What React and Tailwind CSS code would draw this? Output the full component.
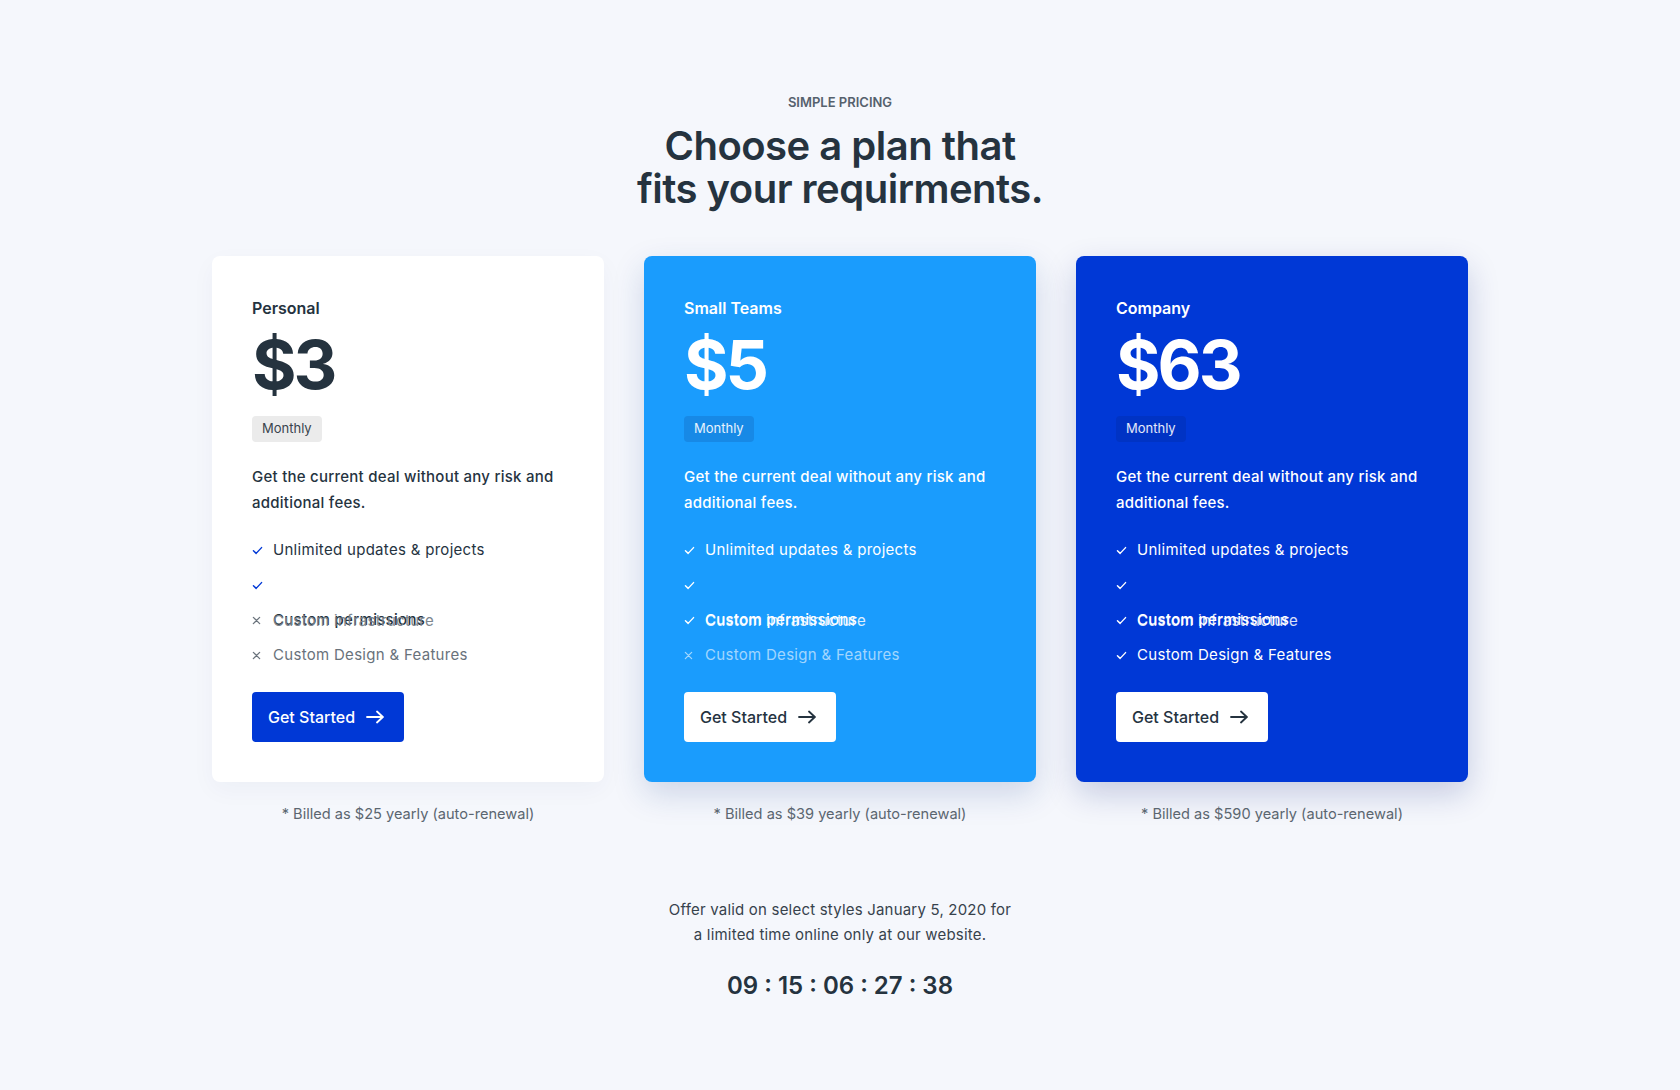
import React from "react";

const plans = [
    {
        name: "Personal",
        price: "$3",
        billed: "* Billed as $25 yearly (auto-renewal)",
        card: "bg-white shadow-[0_8px_24px_rgba(30,50,90,0.04)]",
        title: "text-[#25333f]",
        badge: "bg-[#ebebeb] text-[#3a444d]",
        desc: "text-[#25333f]",
        on: "text-[#0038d6]",
        off: "text-[#6b747d]",
        text: "text-[#25333f]",
        offText: "text-[#69727b]",
        ghost: "text-[#7d868f]",
        button: "bg-[#0038d6] text-white",
        features: [true, true, false, false],
    },
    {
        name: "Small Teams",
        price: "$5",
        billed: "* Billed as $39 yearly (auto-renewal)",
        card: "bg-[#1a9cfd] shadow-[0_12px_32px_rgba(20,60,140,0.18)]",
        title: "text-white",
        badge: "bg-[#1789e6] text-white/90",
        desc: "text-white",
        on: "text-white",
        off: "text-white/60",
        text: "text-white",
        offText: "text-white/60",
        ghost: "text-white/85",
        button: "bg-white text-[#25333f]",
        features: [true, true, true, false],
    },
    {
        name: "Company",
        price: "$63",
        billed: "* Billed as $590 yearly (auto-renewal)",
        card: "bg-[#0038d6] shadow-[0_12px_32px_rgba(10,30,120,0.2)]",
        title: "text-white",
        badge: "bg-[#0033c4] text-white/90",
        desc: "text-white",
        on: "text-white",
        off: "text-white/60",
        text: "text-white",
        offText: "text-white/60",
        ghost: "text-white/85",
        button: "bg-white text-[#25333f]",
        features: [true, true, true, true],
    },
];

function Check({ className }) {
    return (
        <svg viewBox="0 0 12 10" className={`w-[11px] h-[9px] ${className}`} fill="none" stroke="currentColor" strokeWidth={1.6} strokeLinecap="round" strokeLinejoin="round">
            <path d="M1.5 5.2l3 3L10.5 1.8" />
        </svg>
    );
}

function Cross({ className }) {
    return (
        <svg viewBox="0 0 10 10" className={`w-[9px] h-[9px] ${className}`} fill="none" stroke="currentColor" strokeWidth={1.4} strokeLinecap="round">
            <path d="M1.5 1.5l7 7M8.5 1.5l-7 7" />
        </svg>
    );
}

function Arrow() {
    return (
        <svg viewBox="0 0 18 14" className="w-[18px] h-[14px]" fill="none" stroke="currentColor" strokeWidth={1.8} strokeLinecap="round" strokeLinejoin="round">
            <path d="M1 7h16M11 1.5L16.8 7 11 12.5" />
        </svg>
    );
}

function Feature({ ok, plan, children, muted }) {
    return (
        <li className="flex items-center h-6">
            <span className="w-[21px] shrink-0 flex items-center">
                {ok ? <Check className={plan.on} /> : <Cross className={plan.off} />}
            </span>
            <span className={`relative text-[15px] tracking-[0.3px] ${muted ? plan.offText : plan.text}`}>{children}</span>
        </li>
    );
}

function PlanCard({ plan }) {
    const [f1, f2, f3, f4] = plan.features;
    return (
        <div className="w-[392px] flex flex-col items-center">
            <div className={`w-full rounded-lg p-10 ${plan.card}`}>
                <h3 className={`text-base font-semibold leading-6 ${plan.title}`}>{plan.name}</h3>
                <div className={`text-[68px] font-bold leading-[88px] tracking-[-3px] ${plan.title}`}>{plan.price}</div>
                <span className={`mt-2 inline-flex h-[26px] items-center rounded px-[10px] text-[13px] ${plan.badge}`}>Monthly</span>
                <p className={`mt-[22px] text-[15px] font-medium leading-[26px] tracking-[0.25px] ${plan.desc}`}>
                    Get the current deal without any risk and additional fees.
                </p>
                <ul className="mt-[22px] space-y-[11px]">
                    <Feature ok={f1} plan={plan}>Unlimited updates &amp; projects</Feature>
                    <Feature ok={f2} plan={plan}></Feature>
                    <li className="flex items-center h-6">
                        <span className="w-[21px] shrink-0 flex items-center">
                            {f3 ? <Check className={plan.on} /> : <Cross className={plan.off} />}
                        </span>
                        <span className="relative text-[15px] tracking-[0.3px]">
                            <span className={`font-medium ${plan.text}`}>Custom permissions</span>
                            <span className={`absolute left-0 top-[1px] whitespace-nowrap ${plan.ghost}`}>Custom infrastructure</span>
                        </span>
                    </li>
                    <Feature ok={f4} plan={plan} muted={!f4}>Custom Design &amp; Features</Feature>
                </ul>
                <button className={`mt-[25px] flex h-[50px] items-center gap-[11px] rounded pl-4 pr-5 text-base font-medium ${plan.button}`}>
                    Get Started
                    <Arrow />
                </button>
            </div>
            <p className="mt-[21px] text-[14.6px] leading-[22px] text-[#5b6670]">{plan.billed}</p>
        </div>
    );
}

export default function App() {
    return (
        <div className="min-h-screen bg-[#f5f7fc] font-['Inter',sans-serif] pt-[92px] pb-20">
            <div className="text-center">
                <p className="text-[13px] font-semibold leading-5 text-[#55616d]">SIMPLE PRICING</p>
                <h1 className="mt-3 text-[40px] font-semibold leading-[43px] tracking-[-0.5px] text-[#25333f]">
                    Choose a plan that
                    <br />
                    fits your requirments.
                </h1>
            </div>

            <div className="mt-[46px] flex justify-center gap-10">
                {plans.map((plan) => (
                    <PlanCard key={plan.name} plan={plan} />
                ))}
            </div>

            <div className="mt-[72px] text-center">
                <p className="text-[15px] leading-[25px] tracking-[0.2px] text-[#37424c]">
                    Offer valid on select styles January 5, 2020 for
                    <br />
                    a limited time online only at our website.
                </p>
                <p className="mt-[23px] text-2xl font-semibold leading-8 text-[#25333f]">09 : 15 : 06 : 27 : 38</p>
            </div>
        </div>
    );
}
